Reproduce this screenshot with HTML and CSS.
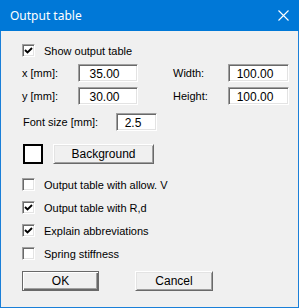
FILE: index.html
```html
<!DOCTYPE html>
<html>
<head>
<meta charset="utf-8">
<link rel="stylesheet" href="styles.css">
</head>
<body>
<div class="dialog">
  <div class="titlebar">
    <span class="title">Output table</span>
    <svg class="close" width="11" height="11" viewBox="0 0 11 11"><path d="M0.5 0.5 L10.5 10.5 M10.5 0.5 L0.5 10.5" stroke="#fff" stroke-width="1.1" fill="none"/></svg>
  </div>
  <div class="content">
    <div class="check row-show">
      <span class="box"><svg width="9" height="9" viewBox="0 0 9 9"><path d="M1 4 L3.5 6.5 L8 2" stroke="#000" stroke-width="1.9" fill="none"/></svg></span>
      <span>Show output table</span>
    </div>
    <div class="grid">
      <span class="lbl">x [mm]:</span>
      <span class="field f-x">35.00</span>
      <span class="lbl lbl-r">Width:</span>
      <span class="field f-w">100.00</span>
      <span class="lbl">y [mm]:</span>
      <span class="field f-x">30.00</span>
      <span class="lbl lbl-r">Height:</span>
      <span class="field f-w">100.00</span>
    </div>
    <div class="row-font">
      <span class="lbl font-lbl">Font size [mm]:</span>
      <span class="field f-font">2.5</span>
    </div>
    <div class="row-bg">
      <span class="swatch"></span>
      <span class="btn btn-bg">Background</span>
    </div>
    <div class="checks">
      <div class="check">
        <span class="box"></span>
        <span>Output table with allow. V</span>
      </div>
      <div class="check">
        <span class="box"><svg width="9" height="9" viewBox="0 0 9 9"><path d="M1 4 L3.5 6.5 L8 2" stroke="#000" stroke-width="1.9" fill="none"/></svg></span>
        <span>Output table with R,d</span>
      </div>
      <div class="check">
        <span class="box"><svg width="9" height="9" viewBox="0 0 9 9"><path d="M1 4 L3.5 6.5 L8 2" stroke="#000" stroke-width="1.9" fill="none"/></svg></span>
        <span>Explain abbreviations</span>
      </div>
      <div class="check">
        <span class="box"></span>
        <span>Spring stiffness</span>
      </div>
    </div>
    <div class="buttons">
      <span class="btn btn-ok">OK</span>
      <span class="btn btn-cancel">Cancel</span>
    </div>
  </div>
</div>
</body>
</html>
```
FILE: styles.css
```css
html, body {
  margin: 0;
  padding: 0;
  background: #f0f0f0;
}
.dialog {
  width: 299px;
  height: 308px;
  box-sizing: border-box;
  border: 1px solid #1a7fd8;
  border-top: none;
  background: #f0f0f0;
  font-family: "Liberation Sans", Arial, sans-serif;
  font-size: 11px;
  color: #000;
}
.titlebar {
  height: 31px;
  margin: 0 -1px;
  background: #0078d7;
  display: flex;
  align-items: center;
  justify-content: space-between;
  padding: 0 10px 1px 10px;
  box-sizing: border-box;
}
.title {
  font-family: "Noto Sans", "Open Sans", sans-serif;
  font-size: 12px;
  color: #fff;
}
.close {
  display: block;
}
.content {
  padding-left: 21px;
}
.check {
  display: flex;
  align-items: center;
  height: 13px;
  gap: 9px;
}
.box {
  width: 13px;
  height: 13px;
  box-sizing: border-box;
  background: #fff;
  border: 1px solid;
  border-color: #a0a0a0 #fff #fff #a0a0a0;
  box-shadow: inset 1px 1px #696969, inset -1px -1px #e3e3e3;
  display: flex;
  align-items: center;
  justify-content: center;
  flex-shrink: 0;
}
.box svg {
  display: block;
}
.row-show {
  margin-top: 13px;
}
.grid {
  margin-top: 7px;
  display: grid;
  grid-template-columns: 56px 60px 90px 61px;
  grid-template-rows: 18px 18px;
  row-gap: 5px;
  align-items: center;
}
.lbl-r {
  padding-left: 35px;
}
.field {
  height: 18px;
  box-sizing: border-box;
  background: #fff;
  border: 1px solid;
  border-color: #a0a0a0 #fff #fff #a0a0a0;
  box-shadow: inset 1px 1px #696969, inset -1px -1px #e3e3e3;
  display: flex;
  align-items: center;
  justify-content: center;
  padding-right: 7px;
  padding-top: 1px;
  font-size: 12px;
}
.f-x { width: 60px; }
.f-w { width: 61px; }
.row-font {
  margin-top: 8px;
  display: flex;
  align-items: center;
  height: 18px;
}
.font-lbl {
  width: 93px;
  margin-left: 1px;
}
.f-font {
  width: 41px;
}
.row-bg {
  margin-top: 13px;
  display: flex;
  align-items: center;
  height: 20px;
}
.swatch {
  width: 20px;
  height: 20px;
  box-sizing: border-box;
  border: 2px solid #000;
  background: #fff;
  margin-left: 1px;
}
.btn {
  display: flex;
  align-items: center;
  justify-content: center;
  height: 20px;
  box-sizing: border-box;
  background: #f0f0f0;
  border: 1px solid;
  border-color: #fff #696969 #696969 #fff;
  box-shadow: inset 1px 1px #e3e3e3, inset -1px -1px #a0a0a0;
  font-size: 12px;
}
.btn-bg {
  width: 101px;
  margin-left: 10px;
}
.checks {
  margin-top: 14px;
  display: flex;
  flex-direction: column;
  gap: 10px;
}
.buttons {
  margin-top: 11px;
  display: flex;
  gap: 36px;
}
.btn-ok {
  width: 77px;
  border: 1px solid #696969;
  box-shadow: inset 1px 1px #fff, inset -1px -1px #696969, inset -2px -2px #a0a0a0;
}
.btn-cancel {
  width: 78px;
}
```
